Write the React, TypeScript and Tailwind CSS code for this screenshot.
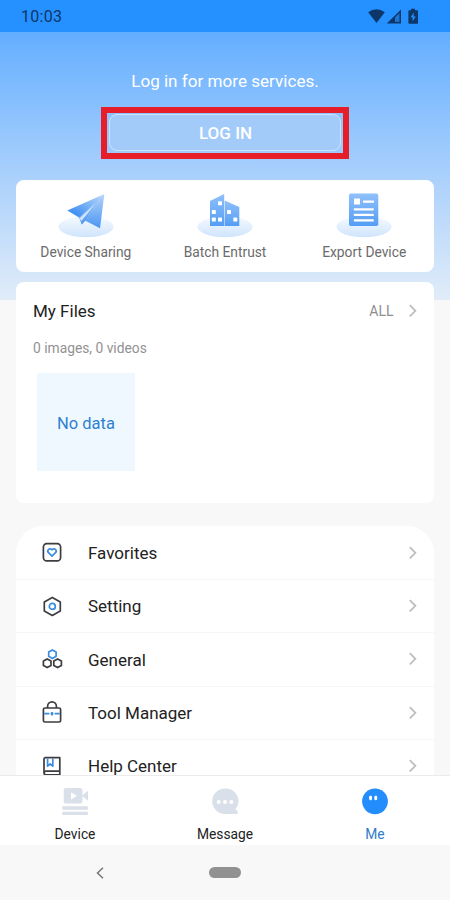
import React from "react";

const Chevron: React.FC = () => (
  <svg className="h-4 w-3 shrink-0" viewBox="0 0 12 16" fill="none" stroke="#bcbcbc" strokeWidth="1.7">
    <path d="M2.8 2.2 8.4 7.8l-5.6 5.6" />
  </svg>
);

/* Soft disc that every service icon stands on */
const Disc: React.FC<{ id: string }> = ({ id }) => (
  <>
    <defs>
      <linearGradient id={`${id}-disc`} x1="0" y1="0" x2="0" y2="1">
        <stop offset="0" stopColor="#f6faff" />
        <stop offset="1" stopColor="#cfe4fc" />
      </linearGradient>
      <linearGradient id={`${id}-fill`} x1="0" y1="0" x2="0" y2="1">
        <stop offset="0" stopColor="#8fc0fa" />
        <stop offset="1" stopColor="#559df4" />
      </linearGradient>
    </defs>
    <ellipse cx="28" cy="33.8" rx="27.5" ry="10.5" fill={`url(#${id}-disc)`} />
  </>
);

const ShareIcon: React.FC = () => (
  <svg className="h-[46px] w-14" viewBox="0 0 56 46">
    <Disc id="share" />
    <defs>
      <linearGradient id="plane" x1="1" y1="0" x2="0.2" y2="0.8">
        <stop offset="0" stopColor="#bfdafa" />
        <stop offset="1" stopColor="#4593f2" />
      </linearGradient>
      <linearGradient id="wing" x1="0.5" y1="0" x2="0.5" y2="1">
        <stop offset="0" stopColor="#b3d3fa" />
        <stop offset="1" stopColor="#4b96f2" />
      </linearGradient>
    </defs>
    <path d="M46.3 1 9.3 17.6 21 24.5 38 9.8Z" fill="url(#plane)" />
    <path d="M46.3 1 27 27.4 42 35.3Z" fill="url(#wing)" />
    <path d="M46.3 1 21 24.5l2.8 7.1 3.6-4Z" fill="url(#wing)" />
    <path d="M38 9.8 21.6 25.3l1.8 3Z" fill="#d3e5fc" />
    <path d="m27.6 23.4-4.4 4.9.6 3.3 3.6-4Z" fill="#5a9ff3" />
  </svg>
);

const EntrustIcon: React.FC = () => (
  <svg className="h-[46px] w-14" viewBox="0 0 56 46">
    <Disc id="entrust" />
    <path d="M13 8 27.2 1v32H13Z" fill="url(#entrust-fill)" />
    <path d="M27.7 7.6 42.3 14v19H27.7Z" fill="url(#entrust-fill)" />
    <g fill="#fff">
      <rect x="21" y="8.3" width="4" height="4" rx=".6" />
      <rect x="14.8" y="17" width="4" height="4" rx=".6" />
      <rect x="14.8" y="24.6" width="4" height="4" rx=".6" />
      <rect x="21" y="24.6" width="4" height="4" rx=".6" />
      <rect x="30" y="17" width="4" height="4" rx=".6" />
      <rect x="36.3" y="24.6" width="4" height="4" rx=".6" />
    </g>
  </svg>
);

const ExportIcon: React.FC = () => (
  <svg className="h-[46px] w-14" viewBox="0 0 56 46">
    <Disc id="export" />
    <rect x="13" y=".6" width="29.3" height="32.4" rx="1.8" fill="url(#export-fill)" />
    <g fill="#fff">
      <rect x="18" y="5.5" width="6" height="6" rx=".5" />
      <rect x="27" y="7.5" width="11" height="2.2" rx=".6" />
      <rect x="17.8" y="15.2" width="20" height="2.2" rx=".6" />
      <rect x="17.8" y="20.8" width="20" height="2.2" rx=".6" />
      <rect x="17.8" y="26.3" width="20" height="2.2" rx=".6" />
    </g>
  </svg>
);

const services = [
  { label: "Device Sharing", icon: <ShareIcon /> },
  { label: "Batch Entrust", icon: <EntrustIcon /> },
  { label: "Export Device", icon: <ExportIcon /> },
];

const menu = [
  {
    label: "Favorites",
    icon: (
      <>
        <rect x="1.4" y="1.6" width="17.2" height="17.2" rx="3.4" />
        <path
          d="M10 14.2 6.5 10.7a2.3 2.3 0 0 1 0-3.2A2.3 2.3 0 0 1 10 7.8a2.3 2.3 0 0 1 3.5-.3 2.3 2.3 0 0 1 0 3.2Z"
          stroke="#3a8de0"
        />
      </>
    ),
  },
  {
    label: "Setting",
    icon: (
      <>
        <path d="m10.3 1.4 8 4.5v9l-8 4.5-8-4.5v-9Z" />
        <circle cx="10.3" cy="10.4" r="3" stroke="#3a8de0" />
      </>
    ),
  },
  {
    label: "General",
    icon: (
      <>
        <path d="m10.4.9 3.7 2.1v4.3l-3.7 2.1-3.7-2.1V3Z" stroke="#3a8de0" />
        <path d="m5.2 9.9 3.8 2.2v4.3l-3.8 2.2-3.8-2.2v-4.3ZM15.6 9.9l3.8 2.2v4.3l-3.8 2.2-3.8-2.2v-4.3Z" />
      </>
    ),
  },
  {
    label: "Tool Manager",
    icon: (
      <>
        <path d="M5.6 6V4.2a4.4 4.4 0 0 1 8.8 0V6" />
        <rect x="1.4" y="6" width="17.2" height="14" rx="1.5" />
        <path d="M2.2 11.7h5.2M12.6 11.7h5.2" stroke="#3a8de0" />
        <path d="M10 9.9v3.6M8.6 11.7h2.8" stroke="#3a8de0" strokeWidth="1.8" />
      </>
    ),
  },
  {
    label: "Help Center",
    icon: (
      <>
        <path d="M17.8 15.2H4a2 2 0 0 0-2 2V2.9a1.3 1.3 0 0 1 1.3-1.3h14.5v17.2H4a2 2 0 0 1-2-2" />
        <path d="M5.6 2.4v7.8l2.6-2.2 2.6 2.2V2.4" stroke="#3a8de0" />
      </>
    ),
  },
];

const tabs = [
  {
    label: "Device",
    color: "text-[#222]",
    icon: (
      <>
        <rect x="2.7" y="1" width="18.8" height="15.5" rx="2.5" fill="#d9e0e9" />
        <path d="M21 8.8 27 3.8v10Z" fill="#d9e0e9" />
        <path d="M10 5.2 16 8.8l-6 3.6Z" fill="#fff" />
        <path d="M1.3 19.3h25.5v3.4H1.3zM1.3 24.7h25.5v3.4H1.3z" fill="#d9e0e9" />
      </>
    ),
  },
  {
    label: "Message",
    color: "text-[#222]",
    icon: (
      <>
        <path d="M14 1.4a12.8 12.8 0 1 0 0 25.6h12.6v-2.4l-2-2.4A12.8 12.8 0 0 0 14 1.4Z" fill="#d9e0e9" />
        <g fill="#fff">
          <circle cx="7.7" cy="14.9" r="2" />
          <circle cx="14" cy="14.9" r="2" />
          <circle cx="20.3" cy="14.9" r="2" />
        </g>
      </>
    ),
  },
  {
    label: "Me",
    color: "text-[#2f7cc9]",
    icon: (
      <>
        <circle cx="14" cy="14.3" r="12.9" fill="#238dfd" />
        <rect x="8.1" y="8.8" width="2.9" height="4.4" rx="1.1" fill="#fff" />
        <rect x="13.3" y="8.8" width="2.9" height="4.4" rx="1.1" fill="#fff" />
      </>
    ),
  },
];

const App: React.FC = () => {
  return (
    <div className="flex h-[900px] w-[450px] flex-col overflow-hidden bg-[#f8f8f8] font-['Roboto',sans-serif] text-[#222]">
      {/* Status bar */}
      <header className="flex h-8 shrink-0 items-center justify-between bg-[#2590ff] pr-[31px] pl-[21px] text-[#0d3768]">
        <span className="pt-px text-[16px] leading-8 tracking-[0.3px]">10:03</span>
        <svg className="h-4 w-[51px]" viewBox="0 0 51 16" fill="currentColor">
          <path d="M.2 4.2a13.5 13.5 0 0 1 16.6 0L8.5 15Z" />
          <path fillRule="evenodd" d="M18.8 15.4 33 1.5v13.9ZM27 9.6v4.2h4.4V5.3Z" />
          <path d="M27 9.6v4.2h4.4V5.3Z" opacity=".3" />
          <path
            fillRule="evenodd"
            d="M43 2.2V.8h4v1.4h2.2c.5 0 .8.3.8.8v12c0 .5-.3.8-.8.8h-8c-.5 0-.8-.3-.8-.8V3c0-.5.3-.8.8-.8Zm2.6 2.6-3 4.5h2v4l3.2-4.9h-2.2Z"
          />
        </svg>
      </header>

      <main className="flex min-h-0 flex-1 flex-col overflow-hidden">
        {/* Login banner */}
        <section className="flex h-[268px] shrink-0 flex-col items-center bg-linear-to-b from-[#63aeff] via-[#a5cefc] to-[#e1ecf8]">
          <p className="mt-[37px] h-6 text-[17.1px] leading-6 text-white">Log in for more services.</p>
          <div className="mt-[14px] mr-px h-[52px] w-[248px] border-[6.5px] border-[#e61e2a] px-[2px] pt-[1px] pb-[2px]">
            <button className="flex h-full w-full items-center justify-center rounded-lg border border-[#cfe4fc] bg-[#a2cbfa] pt-[2px] pl-[2px] text-[17px] font-medium text-white">
              LOG IN
            </button>
          </div>

          <div className="mt-[21px] flex h-[91.5px] w-[417.5px] shrink-0 rounded-lg bg-white">
            {services.map((item) => (
              <div key={item.label} className="flex flex-1 flex-col items-center pt-[13px]">
                {item.icon}
                <span className="mt-[3px] text-[13.8px] leading-5 text-[#6b6b6b]">{item.label}</span>
              </div>
            ))}
          </div>
        </section>

        {/* My files, overlaps the end of the banner */}
        <section className="-mt-[18px] ml-4 h-[221px] w-[417.5px] shrink-0 rounded-lg bg-white pt-[17px] pr-[15px] pl-[17px]">
          <div className="flex h-6 items-center">
            <h2 className="flex-1 pt-px text-[17px]">My Files</h2>
            <span className="mr-[13px] text-[14px] text-[#8e8e8e]">ALL</span>
            <Chevron />
          </div>
          <p className="mt-[15px] text-[13.8px] leading-5 text-[#929292]">0 images, 0 videos</p>
          <div className="mt-[15px] ml-1 flex h-[98px] w-[98px] items-center justify-center bg-[#f0f8ff] pt-1 text-[16.5px] text-[#2f80cf]">
            No data
          </div>
        </section>

        {/* Menu */}
        <ul className="mt-[23px] ml-4 w-[417.5px] shrink-0 rounded-t-[27px] bg-white pt-[0.7px]">
          {menu.map((item) => (
            <li key={item.label} className="flex h-[53.3px] items-center border-b border-[#f6f6f6] pr-[15px] pl-[26px]">
              <svg
                className="h-[21px] w-[21px] overflow-visible"
                viewBox="0 0 21 21"
                fill="none"
                stroke="#3d3d42"
                strokeWidth="1.7"
                strokeLinejoin="round"
              >
                {item.icon}
              </svg>
              <span className="ml-[25px] flex-1 pt-[2px] text-[17px]">{item.label}</span>
              <Chevron />
            </li>
          ))}
        </ul>
      </main>

      {/* Tab bar */}
      <nav className="flex h-[70px] shrink-0 border-t border-[#ebebeb] bg-white">
        {tabs.map((tab) => (
          <div key={tab.label} className="flex flex-1 flex-col items-center pt-[11px]">
            <svg className="h-[29px] w-7" viewBox="0 0 28 29">
              {tab.icon}
            </svg>
            <span className={`mt-2 text-[13.8px] leading-5 ${tab.color}`}>{tab.label}</span>
          </div>
        ))}
      </nav>

      {/* System navigation */}
      <footer className="grid h-[55px] shrink-0 grid-cols-[1fr_32px_1fr] items-center bg-[#f8f8f8]">
        <svg className="ml-24 h-3 w-2" viewBox="0 0 8 12" fill="none" stroke="#777" strokeWidth="1.5">
          <path d="M7 .8 1.5 6 7 11.2" />
        </svg>
        <div className="h-[11px] rounded-full bg-[#919191]" />
      </footer>
    </div>
  );
};

export default App;
